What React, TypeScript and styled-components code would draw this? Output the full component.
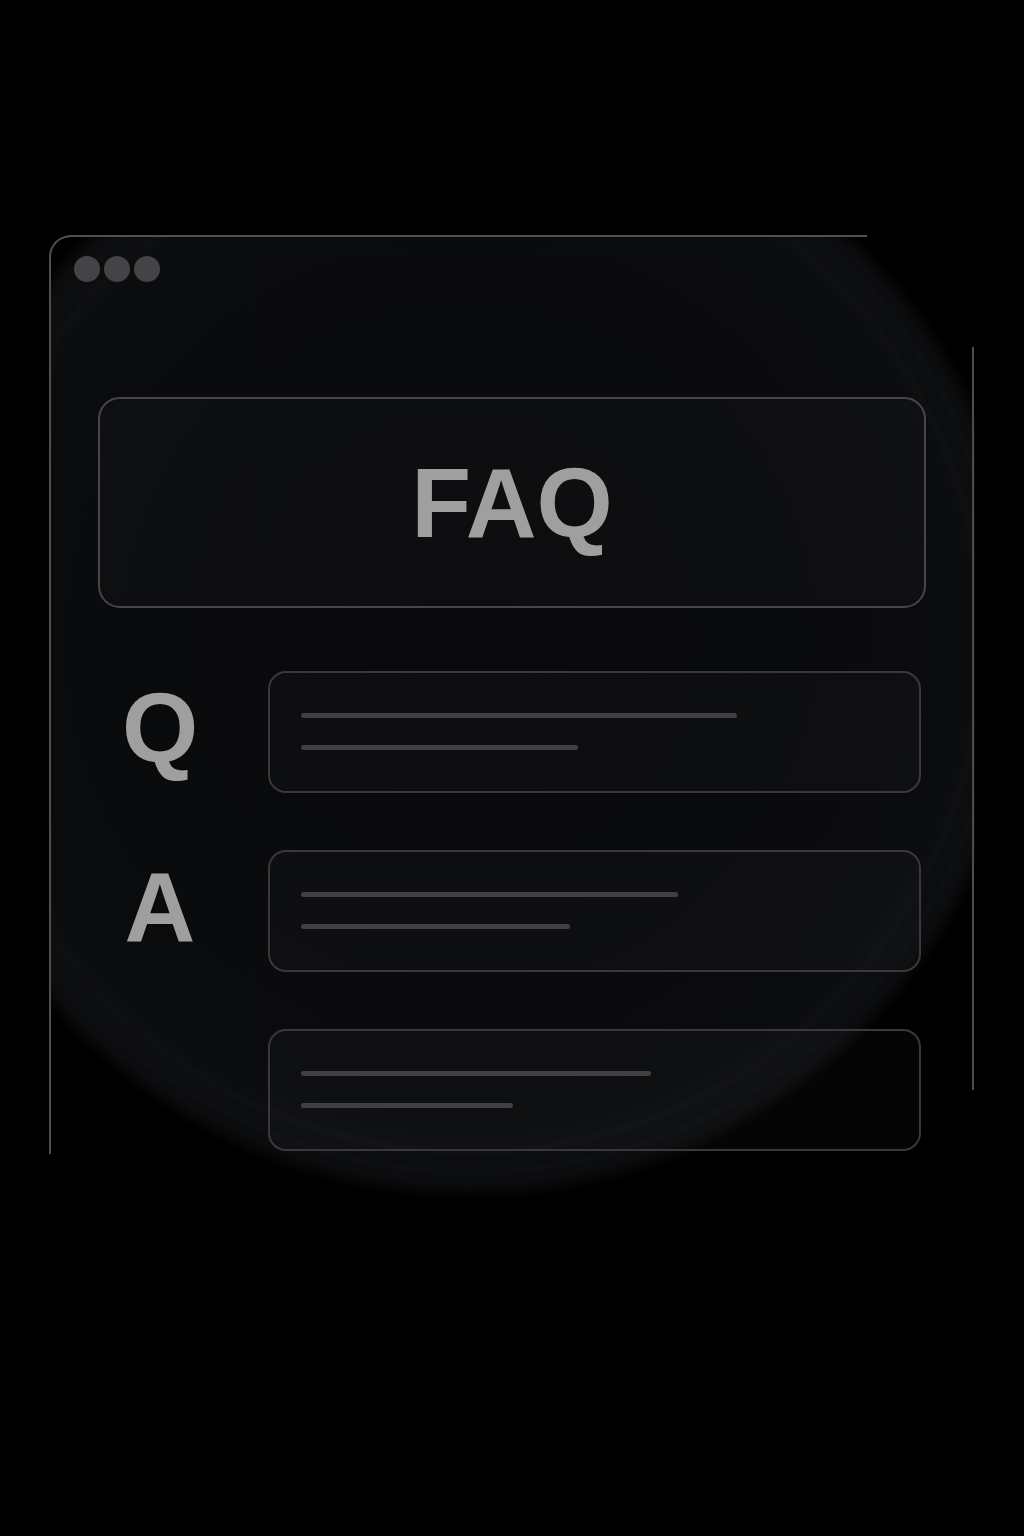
import React from "react";
import styled, { createGlobalStyle } from "styled-components";

const Global = createGlobalStyle`
  html, body {
    margin: 0;
    padding: 0;
    background: #000;
  }
  #root {
    width: 1024px;
    min-height: 1536px;
    background: #000;
  }
`;

const Page = styled.div`
  width: 1024px;
  height: 1536px;
  box-sizing: border-box;
  padding: 235px 0 0 49px;
  background: #000;
  font-family: "Liberation Sans", Arial, sans-serif;
`;

const Frame = styled.div`
  position: relative;
  width: 926px;
  height: 919px;
  display: flex;
  flex-direction: column;

  &::before {
    content: "";
    position: absolute;
    left: 0;
    top: 0;
    width: 818px;
    height: 919px;
    box-sizing: border-box;
    border-top: 2px solid #505050;
    border-left: 2px solid #505050;
    border-top-left-radius: 22px;
    pointer-events: none;
    z-index: 2;
  }

  &::after {
    content: "";
    position: absolute;
    left: 923px;
    top: 112px;
    width: 2px;
    height: 743px;
    background: #4c4c4c;
    z-index: 2;
  }
`;

const Glow = styled.div`
  position: absolute;
  left: 0;
  top: 0;
  right: 0;
  bottom: -45px;
  overflow: hidden;
  border-top-left-radius: 22px;
  z-index: 0;
  background:
    radial-gradient(
      circle 560px at 421px 405px,
      transparent 0%,
      transparent 90%,
      rgba(255, 255, 255, 0.012) 91.5%,
      transparent 92.5%,
      transparent 94%,
      rgba(255, 255, 255, 0.012) 95%,
      transparent 96%,
      transparent 100%
    ),
    radial-gradient(
      circle 560px at 421px 405px,
      #09090b 0%,
      #0a0b0d 80%,
      #0c0d0f 92%,
      #0b0c0e 97%,
      rgba(8, 8, 10, 0.6) 99%,
      transparent 100%
    );
`;

const Dots = styled.div`
  position: relative;
  z-index: 1;
  display: flex;
  gap: 4px;
  margin: 21px 0 0 25px;
`;

const Dot = styled.span`
  width: 26px;
  height: 26px;
  border-radius: 50%;
  background: #444446;
`;

const Content = styled.div`
  position: relative;
  z-index: 1;
  display: flex;
  flex-direction: column;
  padding-left: 49px;
  margin-top: 115px;
`;

const Banner = styled.div`
  width: 828px;
  height: 211px;
  box-sizing: border-box;
  border: 2px solid #474749;
  border-radius: 22px;
  background: rgba(255, 255, 255, 0.018);
  display: flex;
  align-items: center;
  justify-content: center;
`;

const BigText = styled.span`
  font-family: "Liberation Sans", Arial, sans-serif;
  font-weight: 700;
  font-size: 98px;
  line-height: 1;
  color: #9f9f9f;
`;

const Rows = styled.div`
  display: flex;
  flex-direction: column;
  gap: 57px;
  margin-top: 63px;
`;

const Row = styled.div`
  display: grid;
  grid-template-columns: 124px 653px;
  column-gap: 46px;
  align-items: center;
`;

const Letter = styled(BigText)`
  text-align: center;
  padding-bottom: 8px;
`;

const Card = styled.div`
  height: 122px;
  box-sizing: border-box;
  border: 2px solid #39393b;
  border-radius: 18px;
  background: rgba(255, 255, 255, 0.02);
  padding: 40px 0 0 31px;
  display: flex;
  flex-direction: column;
  gap: 27px;
`;

const Bar = styled.div<{ $w: number }>`
  width: ${(p) => p.$w}px;
  height: 5px;
  border-radius: 3px;
  background: #404042;
`;

const rows: { letter: string; bars: [number, number] }[] = [
  { letter: "Q", bars: [436, 277] },
  { letter: "A", bars: [377, 269] },
  { letter: "", bars: [350, 212] },
];

export default function App() {
  return (
    <>
      <Global />
      <Page>
        <Frame>
          <Glow />
          <Dots>
            <Dot />
            <Dot />
            <Dot />
          </Dots>
          <Content>
            <Banner>
              <BigText>FAQ</BigText>
            </Banner>
            <Rows>
              {rows.map((r, i) => (
                <Row key={i}>
                  <Letter>{r.letter}</Letter>
                  <Card>
                    <Bar $w={r.bars[0]} />
                    <Bar $w={r.bars[1]} />
                  </Card>
                </Row>
              ))}
            </Rows>
          </Content>
        </Frame>
      </Page>
    </>
  );
}
